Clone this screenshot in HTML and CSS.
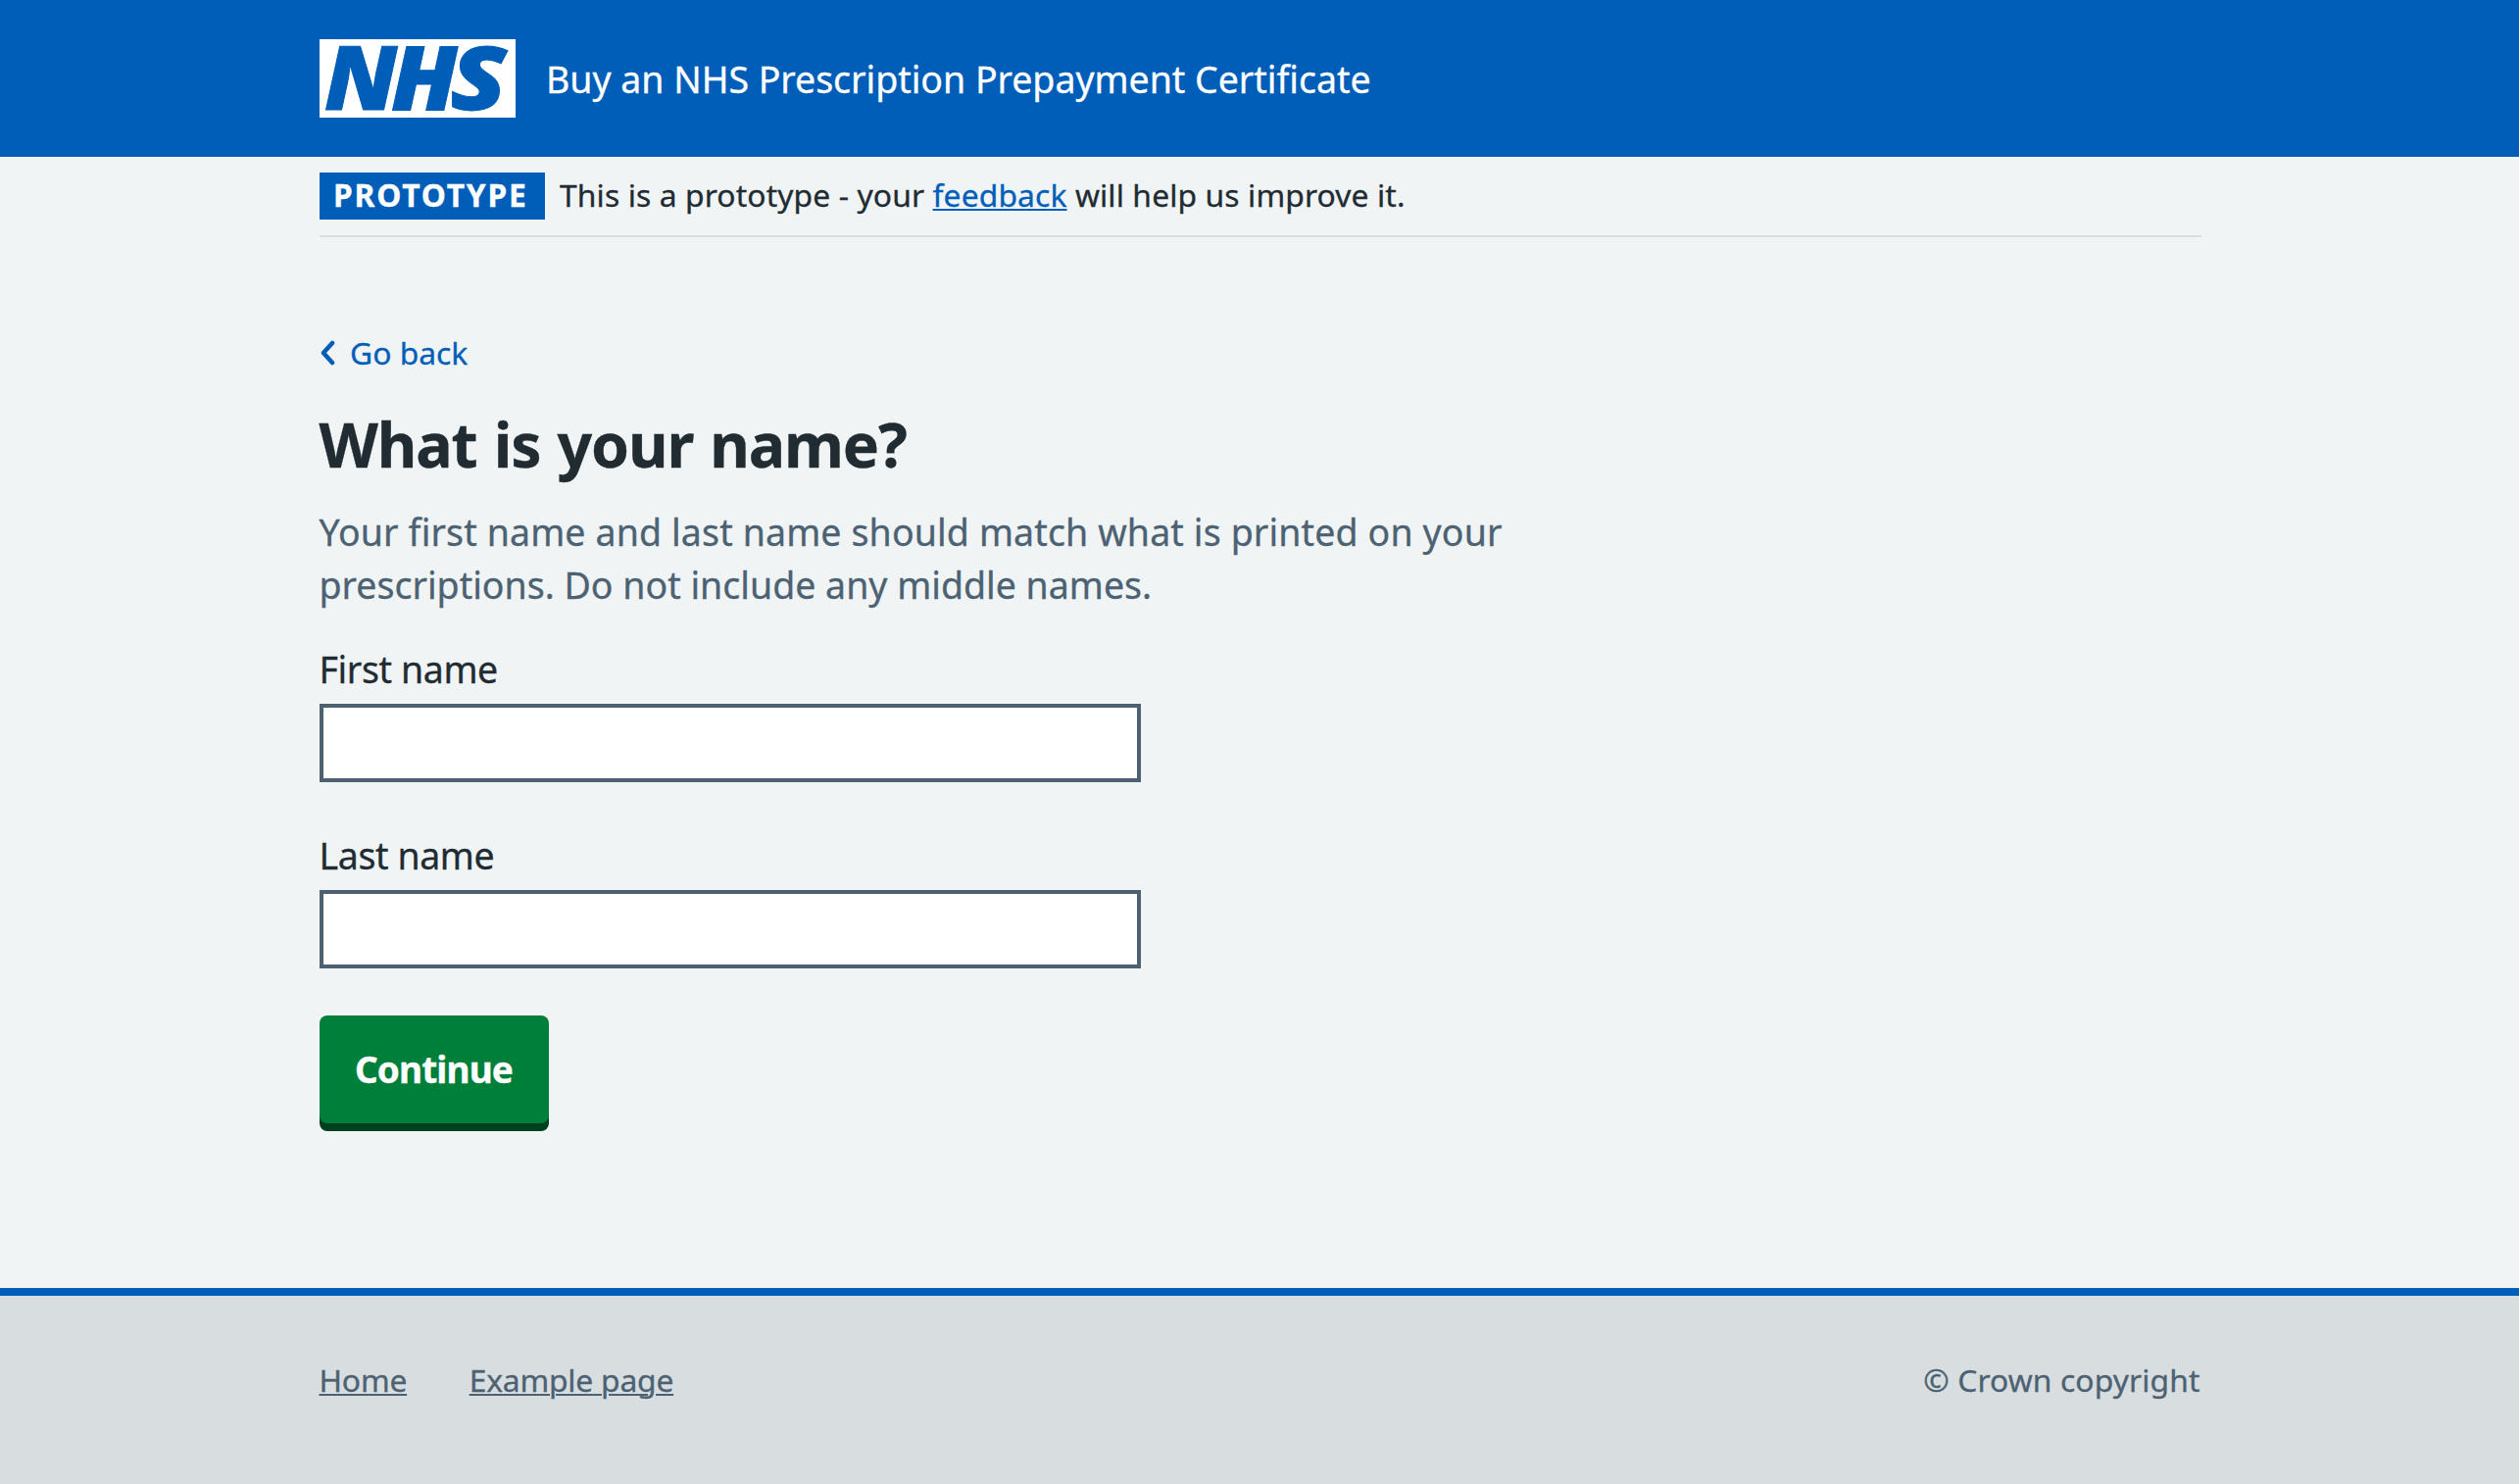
FILE: index.html
```html
<!DOCTYPE html>
<html lang="en">
<head>
<meta charset="utf-8">
<title>What is your name?</title>
<link rel="stylesheet" href="styles.css">
</head>
<body>
<header class="header">
  <div class="container header-inner">
    <svg class="logo" viewBox="0 0 200 80" role="img" aria-label="NHS">
      <rect width="200" height="80" fill="#fff"/>
      <g class="logo-text"><text transform="translate(5.1 72.2) scale(1.05 1)">N</text><text transform="translate(73.1 72.2) scale(1.06 1)">H</text><text transform="translate(133.4 72.2) scale(1.17 1)">S</text></g>
    </svg>
    <span class="service-name">Buy an NHS Prescription Prepayment Certificate</span>
  </div>
</header>
<div class="container">
  <div class="phase">
    <strong class="tag">PROTOTYPE</strong>
    <span class="phase-text">This is a prototype - your <a class="link" href="#">feedback</a> will help us improve it.</span>
  </div>
  <main class="main">
    <a class="back" href="#">
      <svg class="chevron" viewBox="0 0 16 26"><path d="M13 3 L4 13 L13 23"/></svg>
      <span>Go back</span>
    </a>
    <h1 class="heading">What is your name?</h1>
    <p class="hint">Your first name and last name should match what is printed on your <span class="hint-end">prescriptions. Do not include any middle names.</span></p>
    <form class="form">
      <label class="label" for="first">First name</label>
      <input class="input" id="first" type="text">
      <label class="label" for="last">Last name</label>
      <input class="input" id="last" type="text">
      <button class="button" type="button">Continue</button>
    </form>
  </main>
</div>
<footer class="footer">
  <div class="container footer-inner">
    <nav class="footer-links"><a class="footer-link" href="#">Home</a><a class="footer-link" href="#">Example page</a></nav>
    <span class="copyright">© Crown copyright</span>
  </div>
</footer>
</body>
</html>
```
FILE: styles.css
```css
* { box-sizing: border-box; }
body {
  margin: 0;
  min-height: 1514px;
  display: flex;
  flex-direction: column;
  background: #f0f4f5;
  color: #212b32;
  font-family: "Noto Sans", "Open Sans", sans-serif;
  font-size: 38px;
  -webkit-text-stroke: 0.3px;
}
.container { width: 1920px; margin: 0 auto; position: relative; left: 0.5px; }
.header { height: 160px; background: #005eb8; color: #fff; }
.header-inner { height: 160px; display: flex; align-items: center; gap: 31.5px; }
.logo { width: 200px; height: 80px; overflow: visible; }
.logo-text { font-family: "Open Sans", sans-serif; font-weight: 800; font-style: italic; font-size: 89.5px; fill: #005eb8; -webkit-text-stroke: 0; stroke: #005eb8; stroke-width: 1; }
.service-name { font-size: 37.5px; letter-spacing: -0.03px; }
.phase {
  height: 82px;
  padding: 16px 0;
  display: flex;
  gap: 15.5px;
  font-size: 31.8px;
  line-height: 46px;
  border-bottom: 2px solid #d8dde0;
}
.tag { width: 230px; height: 48px; padding-left: 14.5px; background: #005eb8; color: #fff; white-space: nowrap; letter-spacing: 1.8px; }
.phase-text { letter-spacing: 0.12px; }
.link { color: #005eb8; text-underline-offset: 2px; text-decoration-thickness: 2px; }
.main { padding-top: 95px; display: flex; flex-direction: column; align-items: flex-start; }
.back { display: flex; align-items: center; gap: 15.5px; height: 46px; color: #005eb8; text-decoration: none; font-size: 31.8px; line-height: 46px; }
.chevron { width: 16px; height: 26px; fill: none; stroke: currentColor; stroke-width: 4.5; stroke-linecap: round; stroke-linejoin: round; }
.heading { margin: 32px 0 0; font-size: 62.5px; line-height: 76px; letter-spacing: -1.15px; word-spacing: 2px; }
.hint { width: 1240px; margin: 25px 0 0; color: #4c6272; font-size: 37.5px; line-height: 54px; letter-spacing: 0.13px; }
.hint-end { letter-spacing: 0; }
.form { margin-top: 32px; display: flex; flex-direction: column; align-items: flex-start; }
.label { font-size: 37.5px; line-height: 54px; letter-spacing: -0.4px; }
.input { width: 838px; height: 80px; margin: 8px 0 48px; border: 4px solid #4c6272; background: #fff; }
.button { width: 234px; height: 110px; padding: 0 0 2px; border: 0; border-radius: 8px; background: #007f3b; box-shadow: 0 8px 0 #00401e; color: #fff; font: bold 37px "Noto Sans", sans-serif; letter-spacing: -0.9px; }
.footer { margin-top: auto; height: 200px; border-top: 8px solid #005eb8; background: #d8dde0; color: #4c6272; font-size: 31.8px; }
.footer-inner { padding-top: 63px; display: flex; justify-content: space-between; line-height: 46px; }
.footer-links { display: flex; gap: 63.5px; letter-spacing: -0.2px; }
.footer-link { color: #4c6272; text-underline-offset: 2px; text-decoration-thickness: 2px; }
.copyright { padding-right: 1px; letter-spacing: 0.1px; }
```
